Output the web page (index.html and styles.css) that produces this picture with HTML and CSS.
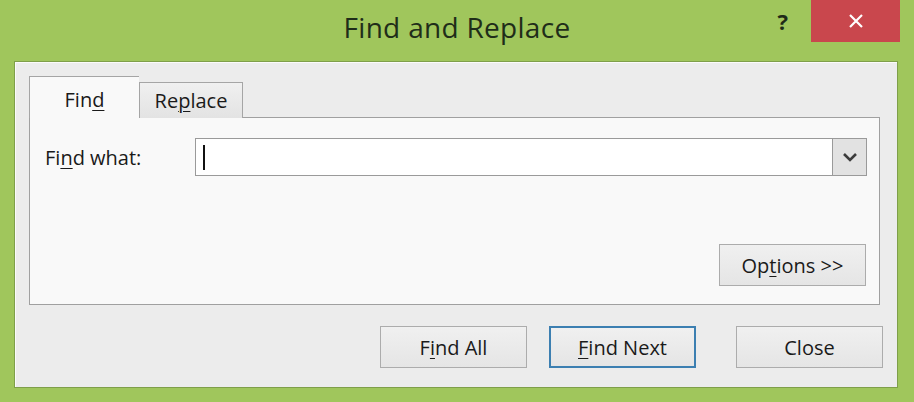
FILE: index.html
```html
<!DOCTYPE html>
<html lang="en">
<head>
    <meta charset="UTF-8">
    <meta name="viewport" content="width=device-width, initial-scale=1.0">
    <title>Find and Replace</title>
    <link rel="stylesheet" href="styles.css">
</head>
<body>
    <div class="window">
        <div class="titlebar">
            <div class="title">Find and Replace</div>
            <div class="controls">
                <span class="help">?</span>
                <button class="close-btn" aria-label="Close">
                    <svg width="16" height="14" viewBox="0 0 16 14">
                        <path d="M2 1 L14 13 M14 1 L2 13" stroke="#fff" stroke-width="2.2" fill="none"/>
                    </svg>
                </button>
            </div>
        </div>

        <div class="client">
            <div class="tabs">
                <div class="tab active">Fin<u>d</u></div>
                <div class="tab">Re<u>p</u>lace</div>
            </div>

            <div class="panel">
                <div class="field-row">
                    <label class="field-label" for="find-what">Fi<u>n</u>d what:</label>
                    <div class="combo">
                        <div class="combo-input" id="find-what"><span class="caret"></span></div>
                        <div class="combo-drop">
                            <svg width="16" height="10" viewBox="0 0 16 10">
                                <path d="M2 2 L8 8 L14 2" stroke="#3c3c3c" stroke-width="2.6" fill="none"/>
                            </svg>
                        </div>
                    </div>
                </div>
                <button class="btn options-btn">Op<u>t</u>ions &gt;&gt;</button>
            </div>

            <div class="actions">
                <button class="btn find-all">F<u>i</u>nd All</button>
                <button class="btn find-next default"><u>F</u>ind Next</button>
                <button class="btn close">Close</button>
            </div>
        </div>
    </div>
</body>
</html>
```

FILE: styles.css
```css
body {
    margin: 0;
    font-family: 'Open Sans', 'Noto Sans', sans-serif;
    background-color: #a0c65c;
    color: #1a1a1a;
}
.window {
    width: 914px;
    height: 402px;
    display: flex;
    flex-direction: column;
}
.titlebar {
    height: 61px;
    display: grid;
    grid-template-columns: 1fr auto 1fr;
    align-items: start;
}
.title {
    grid-column: 2;
    font-size: 28px;
    line-height: 54px;
    color: #1f2d19;
    letter-spacing: 0.3px;
}
.controls {
    grid-column: 3;
    justify-self: end;
    display: flex;
    align-items: flex-start;
    margin-right: 14px;
}
.help {
    font-size: 22px;
    font-weight: bold;
    color: #1e2a18;
    line-height: 24px;
    margin-top: 9px;
    margin-right: 23px;
}
.close-btn {
    width: 89px;
    height: 42px;
    border: none;
    background-color: #c9474d;
    display: flex;
    align-items: center;
    justify-content: center;
    padding: 0;
}
.client {
    margin: 0 16px 0 14px;
    background-color: #ececec;
    border: 1px solid #7f9f4a;
    box-shadow: inset 1px 1px 0 #fbfbfb;
    padding: 14px 14px 0 14px;
    height: 311px;
}
.tabs {
    display: flex;
    align-items: flex-end;
    height: 42px;
    position: relative;
    z-index: 1;
}
.tab {
    font-size: 20px;
    height: 36px;
    line-height: 36px;
    box-sizing: border-box;
    border: 1px solid #a5a5a5;
    border-bottom: none;
    background: linear-gradient(#f0f0f0, #e3e3e3);
    text-align: center;
    width: 104px;
}
.tab.active {
    width: 110px;
    height: 42px;
    line-height: 46px;
    background: #f9f9f9;
    border-right: none;
}
u {
    text-underline-offset: 3px;
    text-decoration-thickness: 1px;
}
.panel {
    height: 188px;
    box-sizing: border-box;
    margin: -1px 3px 0 0;
    background-color: #f9f9f9;
    border: 1px solid #a0a0a0;
    padding: 20px 12px 18px 15px;
    display: flex;
    flex-direction: column;
}
.field-row {
    display: flex;
    align-items: center;
}
.field-label {
    width: 150px;
    font-size: 20px;
}
.combo {
    flex: 1;
    display: flex;
    height: 38px;
    border: 1px solid #9a9a9a;
    box-sizing: border-box;
    background-color: #fff;
}
.combo-input {
    flex: 1;
    display: flex;
    align-items: center;
    padding-left: 7px;
}
.caret {
    width: 2px;
    height: 25px;
    background-color: #111;
}
.combo-drop {
    width: 33px;
    border-left: 1px solid #9a9a9a;
    background-color: #e2e2e2;
    display: flex;
    align-items: center;
    justify-content: center;
}
.btn {
    font-family: 'Open Sans', 'Noto Sans', sans-serif;
    font-size: 20px;
    color: #1a1a1a;
    width: 147px;
    height: 42px;
    padding: 0;
    border: 1px solid #acacac;
    background: linear-gradient(#f0f0f0, #e5e5e5);
}
.options-btn {
    margin-top: auto;
    align-self: flex-end;
    margin-right: 1px;
}
.actions {
    display: flex;
    justify-content: flex-end;
    margin-top: 21px;
}
.find-next {
    margin-left: 22px;
}
.close {
    margin-left: 40px;
}
.btn.default {
    border: 2px solid #3c7fb1;
}
```
